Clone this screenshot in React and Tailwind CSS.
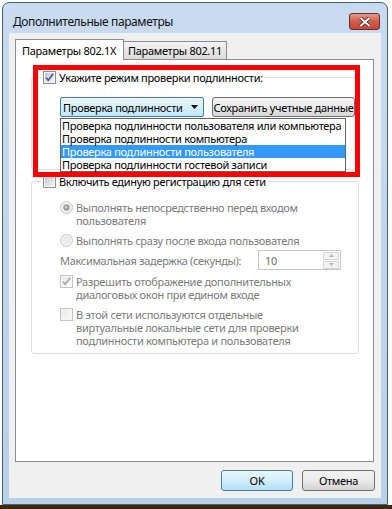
import React from 'react';

const Check = ({ checked, disabled }) => (
    <span
        className={`relative flex h-[13px] w-[13px] shrink-0 items-center justify-center border bg-[#f6f6f6] ${
            disabled ? 'border-[#c4c4c4]' : 'border-[#8e8f8f]'
        }`}
    >
        <span
            className={`h-[9px] w-[9px] bg-gradient-to-br ${
                disabled ? 'from-[#e9e9e9] to-[#fafafa]' : 'from-[#c4c8ce] to-[#f3f4f6]'
            }`}
        />
        {checked && (
            <svg className="absolute left-0 top-0" width="11" height="11" viewBox="0 0 11 11">
                <path
                    d="M2 5.6 L4.3 8.2 L9.2 1.8"
                    fill="none"
                    stroke={disabled ? '#a8a8a8' : '#4b5f97'}
                    strokeWidth="1.7"
                />
            </svg>
        )}
    </span>
);

const Radio = ({ checked }) => (
    <svg className="shrink-0" width="13" height="13" viewBox="0 0 13 13">
        <circle cx="6.5" cy="6.5" r="6" fill="#f5f5f5" stroke="#c4c4c4" />
        <circle cx="6.5" cy="6.5" r="4.2" fill="#ebebeb" />
        {checked && <circle cx="6.5" cy="6.5" r="3.2" fill="#a2a2a2" />}
        {checked && <circle cx="6" cy="6" r="1.3" fill="#c9c9c9" />}
    </svg>
);

const items = [
    'Проверка подлинности пользователя или компьютера',
    'Проверка подлинности компьютера',
    'Проверка подлинности пользователя',
    'Проверка подлинности гостевой записи',
];

const App = () => {
    return (
        <div className="flex h-[509px] w-[392px] flex-col overflow-hidden bg-white font-['Noto_Sans',sans-serif] text-[11px] leading-[13px] tracking-[-0.3px] text-black">
            {/* window */}
            <div className="ml-[2px] mt-[2px] flex h-[503px] w-[386px] flex-col rounded-t-[7px] border border-[#4d5d72] bg-gradient-to-b from-[#c8dbf0] to-[#b9d0e9]">
                {/* title bar */}
                <div className="flex h-[30px] shrink-0 items-start justify-between">
                    <span className="pl-[10px] pt-[11px] text-[12px] leading-[16px] tracking-[-0.4px] text-[#111]">
                        Дополнительные параметры
                    </span>
                    <div className="mr-[7px] mt-[10px] flex h-[17px] w-[31px] items-center justify-center rounded-[3px] border border-[#6e2a25] bg-gradient-to-b from-[#e39a8c] via-[#cf5c4c] to-[#c8473a]">
                        <svg width="12" height="10" viewBox="0 0 12 10">
                            <path d="M1.5 1 L10.5 9 M10.5 1 L1.5 9" stroke="#4a1d19" strokeWidth="3.6" />
                            <path d="M1.5 1 L10.5 9 M10.5 1 L1.5 9" stroke="#ffffff" strokeWidth="2" />
                        </svg>
                    </div>
                </div>

                {/* client area */}
                <div className="mx-[6px] mb-[6px] flex flex-1 flex-col bg-[#f0f0f0] pl-[6px] pr-[7px] pt-[6px]">
                    {/* tabs */}
                    <div className="flex h-[20px] items-end whitespace-nowrap">
                        <div className="relative z-10 -mb-[1px] flex h-[21px] w-[109px] items-center border border-b-0 border-[#898c95] bg-white pl-[6px]">
                            Параметры 802.1X
                        </div>
                        <div className="flex h-[18px] w-[103px] items-center border border-b-0 border-l-0 border-[#898c95] bg-gradient-to-b from-[#f3f3f3] to-[#dcdcdc] pl-[4px]">
                            Параметры 802.11
                        </div>
                    </div>

                    {/* tab panel */}
                    <div className="relative h-[403px] border border-[#898c95] bg-white">
                        {/* group 1 */}
                        <div className="ml-[15px] mt-[17px] w-[328px] rounded-[3px] border border-[#d5dfe5] pb-[52px]">
                            <div className="-mt-[7px] ml-[9px] flex w-fit items-center gap-[3px] bg-white px-[2px]">
                                <Check checked />
                                <span>Укажите режим проверки подлинности:</span>
                            </div>
                            <div className="mt-[13px] flex pl-[28px]">
                                <div className="relative">
                                    <div className="flex h-[20px] w-[144px] items-center rounded-[2px] border border-[#3c7fb1] bg-gradient-to-b from-[#eaf6fd] via-[#d9f0fc] to-[#bee6fd] pl-[2px] pr-[5px]">
                                        <span className="flex-1 whitespace-nowrap">Проверка подлинности</span>
                                        <svg width="7" height="4" viewBox="0 0 7 4">
                                            <path d="M0 0 H7 L3.5 4 Z" fill="#000" />
                                        </svg>
                                    </div>
                                    <div className="absolute left-0 top-[21px] z-20 w-[286px] border border-[#646464] bg-white">
                                        {items.map((t, i) => (
                                            <div
                                                key={t}
                                                className={`h-[13px] whitespace-nowrap pl-[1px] ${
                                                    i === 2 ? 'bg-[#3399ff] text-white' : ''
                                                }`}
                                            >
                                                {t}
                                            </div>
                                        ))}
                                    </div>
                                </div>
                                <div className="ml-[8px] flex h-[20px] w-[143px] items-center justify-center overflow-hidden whitespace-nowrap rounded-[3px] border border-[#707070] bg-gradient-to-b from-[#f2f2f2] via-[#ebebeb] to-[#d6d6d6]">
                                    Сохранить учетные данные
                                </div>
                            </div>
                        </div>

                        {/* group 2 */}
                        <div className="ml-[15px] mt-[11px] w-[328px] rounded-[3px] border border-[#d5dfe5] pb-[6px]">
                            <div className="-mt-[7px] ml-[9px] flex w-fit items-center gap-[3px] bg-white px-[2px]">
                                <Check />
                                <span>Включить единую регистрацию для сети</span>
                            </div>
                            <div className="flex flex-col pl-[28px] text-[#7a7a7a]">
                                <div className="mt-[13px] flex items-start gap-[3px]">
                                    <Radio checked />
                                    <span>
                                        Выполнять непосредственно перед входом
                                        <br />
                                        пользователя
                                    </span>
                                </div>
                                <div className="mt-[7px] flex items-start gap-[3px]">
                                    <Radio />
                                    <span>Выполнять сразу после входа пользователя</span>
                                </div>
                                <div className="mt-[3px] flex items-center">
                                    <span className="w-[198px]">Максимальная задержка (секунды):</span>
                                    <div className="flex h-[20px] w-[83px] items-center border border-[#c6c6c6] bg-white pl-[6px] text-[#6d6d6d]">
                                        <span className="flex-1">10</span>
                                        <div className="mr-[1px] flex h-[17px] w-[16px] flex-col gap-[1px]">
                                            <div className="flex flex-1 items-center justify-center rounded-[1px] border border-[#d6d6d6] bg-[#f4f4f4]">
                                                <svg width="5" height="3" viewBox="0 0 5 3">
                                                    <path d="M0 3 H5 L2.5 0 Z" fill="#b5b5b5" />
                                                </svg>
                                            </div>
                                            <div className="flex flex-1 items-center justify-center rounded-[1px] border border-[#d6d6d6] bg-[#f4f4f4]">
                                                <svg width="5" height="3" viewBox="0 0 5 3">
                                                    <path d="M0 0 H5 L2.5 3 Z" fill="#b5b5b5" />
                                                </svg>
                                            </div>
                                        </div>
                                    </div>
                                </div>
                                <div className="mt-[5px] flex items-start gap-[3px]">
                                    <Check checked disabled />
                                    <span>
                                        Разрешить отображение дополнительных
                                        <br />
                                        диалоговых окон при едином входе
                                    </span>
                                </div>
                                <div className="mt-[7px] flex items-start gap-[3px]">
                                    <Check disabled />
                                    <span>
                                        В этой сети используются отдельные
                                        <br />
                                        виртуальные локальные сети для проверки
                                        <br />
                                        подлинности компьютера и пользователя
                                    </span>
                                </div>
                            </div>
                        </div>

                        {/* red annotation */}
                        <div className="pointer-events-none absolute left-[17px] top-[5px] z-30 h-[112px] w-[327px] border-[5px] border-[#ff0000]" />
                    </div>

                    {/* buttons */}
                    <div className="-mr-[1px] mt-[8px] flex justify-end gap-[9px]">
                        <div className="flex h-[21px] w-[72px] items-center justify-center rounded-[3px] border border-[#3c7fb1] bg-gradient-to-b from-[#ecf7fd] via-[#d3eefb] to-[#b5def6]">
                            OK
                        </div>
                        <div className="flex h-[21px] w-[73px] items-center justify-center rounded-[3px] border border-[#707070] bg-gradient-to-b from-[#f2f2f2] via-[#ebebeb] to-[#d3d3d3]">
                            Отмена
                        </div>
                    </div>
                </div>
            </div>
            <div className="flex-1 bg-[#3d2a12]" />
        </div>
    );
};

export default App;
